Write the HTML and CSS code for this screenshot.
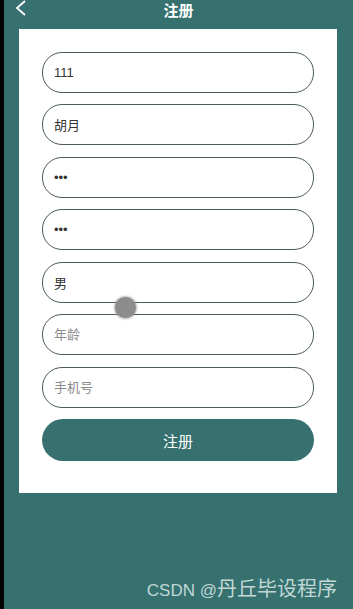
FILE: index.html
```html
<!DOCTYPE html>
<html lang="zh">
<head>
<meta charset="utf-8">
<title>注册</title>
<link rel="stylesheet" href="styles.css">
</head>
<body>
<div class="screen">
  <div class="edge"></div>
  <div class="app">
    <header class="topbar">
      <svg class="back" width="12" height="16" viewBox="0 0 12 16"><polyline points="10,1 2,8 10,15" fill="none" stroke="#ffffff" stroke-width="1.8"/></svg>
      <h1 class="title">注册</h1>
    </header>
    <main class="card">
      <form class="form">
        <input class="field" type="text" value="111">
        <input class="field" type="text" value="胡月">
        <input class="field" type="password" value="111">
        <input class="field" type="password" value="111" autofocus>
        <input class="field" type="text" value="男">
        <input class="field" type="text" placeholder="年龄">
        <input class="field" type="text" placeholder="手机号">
        <button class="submit" type="button">注册</button>
      </form>
    </main>
  </div>
  <div class="touch"></div>
  <div class="watermark">CSDN @<span class="wm-cn">丹丘毕设程序</span></div>
</div>
</body>
</html>
```
FILE: styles.css
```css
* { box-sizing: border-box; }
html, body { margin: 0; padding: 0; }
body {
  width: 353px;
  height: 609px;
  overflow: hidden;
  background: #367170;
  font-family: "Liberation Sans", "Noto Sans CJK SC", sans-serif;
}
.screen {
  position: relative;
  display: flex;
  width: 353px;
  height: 609px;
}
.edge {
  width: 4px;
  flex: none;
  background: #050505;
}
.app {
  flex: 1;
  display: flex;
  flex-direction: column;
  background: #367170;
}
.topbar {
  height: 29px;
  display: flex;
  align-items: flex-start;
  justify-content: center;
  position: relative;
}
.back {
  position: absolute;
  left: 11px;
  top: 0;
}
.title {
  margin: 0;
  padding-top: 2px;
  text-align: center;
  font-size: 15px;
  line-height: 15px;
  font-weight: bold;
  color: #ffffff;
  font-family: "Noto Sans CJK SC", sans-serif;
}
.card {
  margin: 0 16px 0 15px;
  background: #ffffff;
  padding: 23px 23px 32px 23px;
}
.form {
  display: flex;
  flex-direction: column;
  gap: 11.8px;
}
.field {
  display: block;
  width: 100%;
  height: 40.7px;
  border: 1px solid #4a5959;
  border-radius: 20px;
  padding: 0 11px;
  font-family: "Liberation Sans", "Noto Sans CJK SC", sans-serif;
  font-size: 13px;
  color: #333333;
  background: #ffffff;
  outline: none;
  caret-color: #111111;
}
.field::placeholder {
  color: #8a8a8a;
}
.submit {
  height: 42px;
  width: 100%;
  border: none;
  border-radius: 21px;
  background: #367170;
  color: #ffffff;
  font-family: "Noto Sans CJK SC", sans-serif;
  font-size: 15px;
  font-weight: normal;
}
.touch {
  position: absolute;
  left: 115px;
  top: 297px;
  width: 21px;
  height: 21px;
  border-radius: 50%;
  background: #8c8c8c;
  box-shadow: 0 0 2px 1px rgba(140,140,140,0.6);
}
.watermark {
  position: absolute;
  right: 16px;
  top: 578px;
  font-family: "Liberation Sans", "Noto Sans CJK SC", sans-serif;
  font-size: 17px;
  line-height: 22px;
  color: rgba(220, 235, 232, 0.85);
  white-space: nowrap;
}
.wm-cn {
  font-size: 20px;
  letter-spacing: 0;
}
```
